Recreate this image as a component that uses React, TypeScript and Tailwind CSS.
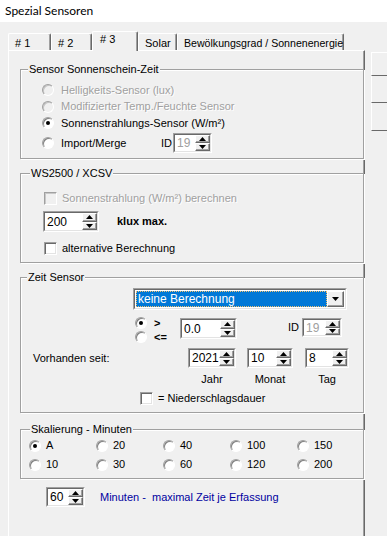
import React from "react";

type Kids = { children?: React.ReactNode };

function Radio({ checked = false, disabled = false }: { checked?: boolean; disabled?: boolean }) {
  return (
    <span
      className={
        disabled
          ? "flex h-[12px] w-[12px] shrink-0 items-center justify-center rounded-full border border-t-[#a0a0a0] border-l-[#a0a0a0] border-b-white border-r-white bg-[#f0f0f0] shadow-[inset_1px_1px_0_#c4c4c4]"
          : "flex h-[12px] w-[12px] shrink-0 items-center justify-center rounded-full border border-t-[#a0a0a0] border-l-[#a0a0a0] border-b-white border-r-white bg-white shadow-[inset_1px_1px_0_#808080]"
      }
    >
      {checked && <span className="h-[4px] w-[4px] rounded-full bg-black" />}
    </span>
  );
}

function Check({ disabled = false }: { disabled?: boolean }) {
  return (
    <span
      className={
        disabled
          ? "block h-[13px] w-[13px] shrink-0 border border-t-[#a0a0a0] border-l-[#a0a0a0] border-b-white border-r-white bg-[#f0f0f0] shadow-[inset_1px_1px_0_#c8c8c8]"
          : "block h-[13px] w-[13px] shrink-0 border border-t-[#a0a0a0] border-l-[#a0a0a0] border-b-white border-r-white bg-white shadow-[inset_1px_1px_0_#696969,inset_-1px_-1px_0_#e3e3e3]"
      }
    />
  );
}

function Tri({ up = false }: { up?: boolean }) {
  return (
    <svg width="7" height="4" viewBox="0 0 7 4" className="block">
      {up ? <polygon points="0,4 7,4 3.5,0" fill="#000" /> : <polygon points="0,0 7,0 3.5,4" fill="#000" />}
    </svg>
  );
}

function SpinBtn({ up = false }: { up?: boolean }) {
  return (
    <div className="flex flex-1 items-center justify-center border border-t-white border-l-white border-b-[#696969] border-r-[#696969] bg-[#f0f0f0] shadow-[inset_-1px_-1px_0_#a0a0a0]">
      <Tri up={up} />
    </div>
  );
}

function Spin({ value, box, gray = false }: { value: string; box: string; gray?: boolean }) {
  return (
    <div className={`flex shrink-0 border border-t-[#a0a0a0] border-l-[#a0a0a0] border-b-white border-r-white ${box}`}>
      <div className="flex min-w-0 flex-1 border border-t-[#696969] border-l-[#696969] border-b-[#e3e3e3] border-r-[#e3e3e3] bg-white">
        <span className={gray ? "flex flex-1 items-center pl-[2px] text-[12px] text-[#a0a0a0]" : "flex flex-1 items-center pl-[2px] text-[12px] text-black"}>
          {value}
        </span>
        <div className="flex w-[15px] flex-col">
          <SpinBtn up />
          <SpinBtn />
        </div>
      </div>
    </div>
  );
}

function Group({ title, box, label, children }: { title: string; box: string; label: string } & Kids) {
  return (
    <div className={`relative ml-[11px] w-[344px] border border-[#a0a0a0] shadow-[inset_1px_1px_0_#fff,1px_1px_0_#fff] ${box}`}>
      <span className={`absolute top-[-8px] bg-[#f0f0f0] px-[1px] leading-[14px] ${label}`}>{title}</span>
      {children}
    </div>
  );
}

function Tab({ label, box, active = false }: { label: string; box: string; active?: boolean }) {
  return (
    <div
      className={
        active
          ? `relative z-10 mb-[-1px] flex h-[20px] items-center whitespace-nowrap rounded-t-[2px] border-l border-t border-r border-l-white border-t-white border-r-[#696969] bg-[#f0f0f0] pb-[4px] pl-[7px] shadow-[inset_-1px_0_0_#a0a0a0] ${box}`
          : `flex h-[17px] items-center overflow-hidden whitespace-nowrap rounded-t-[2px] border-l border-t border-r border-l-white border-t-white border-r-[#696969] bg-[#f0f0f0] pl-[6px] pt-[3px] shadow-[inset_-1px_0_0_#a0a0a0] ${box}`
      }
    >
      {label}
    </div>
  );
}

export default function App() {
  const dis = "text-[#a0a0a0] [text-shadow:1px_1px_0_#fff]";
  return (
    <div className="h-[536px] w-[387px] overflow-hidden bg-[#f0f0f0] font-['Liberation_Sans',Arial,sans-serif] text-[11px] text-black">
      <div className="flex h-[22px] items-center bg-white pl-[5px] font-['Lato',sans-serif] text-[12px]">Spezial Sensoren</div>

      <div className="flex h-[28px] items-end pl-[8px]">
        <Tab label="# 1" box="w-[43px]" />
        <Tab label="# 2" box="w-[41px]" />
        <Tab label="# 3" box="w-[46px]" active />
        <Tab label="Solar" box="w-[39px]" />
        <Tab label="Bewölkungsgrad / Sonnenenergie" box="w-[167px] text-[10.6px]" />
      </div>

      <div className="flex">
        <div className="ml-[8px] h-[486px] w-[369px] border-l border-t border-r border-l-white border-t-white border-r-[#696969] shadow-[inset_-1px_0_0_#a0a0a0]">
          {/* Group 1 */}
          <Group title="Sensor Sonnenschein-Zeit" box="mt-[18px] h-[90px]" label="left-[7px]">
            <div className="flex flex-col pt-[12px]">
              <div className="flex h-[16px] items-center gap-[7px] pl-[21px]">
                <Radio disabled />
                <span className={dis}>Helligkeits-Sensor (lux)</span>
              </div>
              <div className="flex h-[17px] items-center gap-[7px] pl-[21px]">
                <Radio disabled />
                <span className={dis}>Modifizierter Temp./Feuchte Sensor</span>
              </div>
              <div className="flex h-[16px] items-center gap-[7px] pl-[21px]">
                <Radio checked />
                <span>Sonnenstrahlungs-Sensor (W/m²)</span>
              </div>
              <div className="mt-[2px] flex h-[20px] items-center gap-[7px] pl-[21px]">
                <Radio />
                <span className="w-[100px]">Import/Merge</span>
                <span className="ml-[-7px] w-[12px]">ID</span>
                <Spin value="19" box="ml-[-7px] w-[39px] h-[20px]" gray />
              </div>
            </div>
          </Group>

          {/* Group 2 */}
          <Group title="WS2500 / XCSV" box="mt-[14px] h-[90px]" label="left-[9px]">
            <div className="flex flex-col pt-[18px]">
              <div className="flex h-[13px] items-center gap-[5px] pl-[23px]">
                <Check disabled />
                <span className={dis}>Sonnenstrahlung (W/m²) berechnen</span>
              </div>
              <div className="mt-[6px] flex items-center pl-[22px]">
                <Spin value="200" box="w-[56px] h-[21px]" />
                <span className="ml-[18px] font-bold">klux max.</span>
              </div>
              <div className="mt-[10px] flex h-[13px] items-center gap-[5px] pl-[23px]">
                <Check />
                <span>alternative Berechnung</span>
              </div>
            </div>
          </Group>

          {/* Group 3 */}
          <Group title="Zeit Sensor" box="mt-[14px] h-[136px]" label="left-[6px]">
            <div className="flex flex-col pt-[10px]">
              <div className="ml-[112px] flex h-[22px] w-[214px] border border-t-[#a0a0a0] border-l-[#a0a0a0] border-b-white border-r-white">
                <div className="flex flex-1 border border-t-[#696969] border-l-[#696969] border-b-[#e3e3e3] border-r-[#e3e3e3] bg-white p-[1px]">
                  <div className="flex flex-1 items-center bg-[#0078d7] pl-[2px] text-[12px] text-white outline-1 outline-offset-[-1px] outline-dotted outline-[#f0c070]">
                    keine Berechnung
                  </div>
                  <div className="flex w-[17px] items-center justify-center border border-t-white border-l-white border-b-[#696969] border-r-[#696969] bg-[#f0f0f0] shadow-[inset_-1px_-1px_0_#a0a0a0]">
                    <Tri />
                  </div>
                </div>
              </div>

              <div className="mt-[6px] flex items-start pl-[114px]">
                <div className="flex w-[45px] flex-col">
                  <div className="flex h-[14px] items-center gap-[7px]">
                    <Radio checked />
                    <span className="font-bold">&gt;</span>
                  </div>
                  <div className="flex h-[14px] items-center gap-[7px]">
                    <Radio />
                    <span className="font-bold">&lt;=</span>
                  </div>
                </div>
                <Spin value="0.0" box="mt-[2px] w-[57px] h-[21px]" />
                <span className="ml-[51px] mt-[4px] w-[14px] leading-[14px]">ID</span>
                <Spin value="19" box="mt-[2px] w-[40px] h-[19px]" gray />
              </div>

              <div className="mt-[4px] flex items-start pl-[12px]">
                <span className="flex h-[20px] w-[155px] items-center">Vorhanden seit:</span>
                <div className="flex w-[48px] flex-col items-center">
                  <Spin value="2021" box="w-[48px] h-[20px]" />
                  <span className="mt-[5px] leading-[13px]">Jahr</span>
                </div>
                <div className="ml-[11px] flex w-[46px] flex-col items-center">
                  <Spin value="10" box="w-[46px] h-[20px]" />
                  <span className="mt-[5px] leading-[13px]">Monat</span>
                </div>
                <div className="ml-[12px] flex w-[44px] flex-col items-center">
                  <Spin value="8" box="w-[44px] h-[20px]" />
                  <span className="mt-[5px] leading-[13px]">Tag</span>
                </div>
              </div>

              <div className="mt-[6px] flex h-[13px] items-center gap-[5px] pl-[119px]">
                <Check />
                <span>= Niederschlagsdauer</span>
              </div>
            </div>
          </Group>

          {/* Group 4 */}
          <Group title="Skalierung - Minuten" box="mt-[16px] h-[50px]" label="left-[9px]">
            <div className="grid grid-cols-[67px_67px_67px_67px_67px] pl-[8px] pt-[6px]">
              {[
                ["A", true],
                ["20", false],
                ["40", false],
                ["100", false],
                ["150", false],
                ["10", false],
                ["30", false],
                ["60", false],
                ["120", false],
                ["200", false],
              ].map(([l, c]) => (
                <div key={l as string} className="flex h-[19px] items-center gap-[5px]">
                  <Radio checked={c as boolean} />
                  <span>{l as string}</span>
                </div>
              ))}
            </div>
          </Group>

          <div className="mt-[8px] flex items-center pl-[37px]">
            <Spin value="60" box="w-[39px] h-[20px]" />
            <span className="ml-[15px] text-[#0000a0]">Minuten -&nbsp; maximal Zeit je Erfassung</span>
          </div>
        </div>

        <div className="ml-[6px] mt-[2px] flex w-[20px] flex-col">
          <div className="h-[24px] border-l border-t border-b border-l-white border-t-white border-b-[#696969]" />
          <div className="h-[27px] border-l border-b border-l-white border-b-[#696969]" />
          <div className="h-[28px] border-l border-b border-l-white border-b-[#696969]" />
        </div>
      </div>
    </div>
  );
}
